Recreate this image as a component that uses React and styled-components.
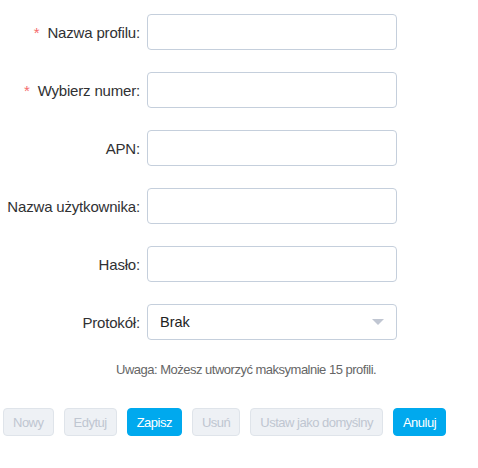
import React from "react";
import styled, { createGlobalStyle } from "styled-components";

const Global = createGlobalStyle`
  body {
    margin: 0;
    background: #fff;
    font-family: "Liberation Sans", Arial, sans-serif;
  }
`;

const Page = styled.div`
  width: 478px;
  padding-top: 14px;
`;

const Form = styled.div`
  display: flex;
  flex-direction: column;
  gap: 22px;
`;

const Row = styled.div`
  display: flex;
  align-items: center;
`;

const Label = styled.label`
  width: 140px;
  padding-right: 7px;
  box-sizing: content-box;
  text-align: right;
  font-size: 15px;
  letter-spacing: -0.18px;
  color: #303133;
  white-space: nowrap;
`;

const Star = styled.span`
  color: #f56c6c;
  margin-right: 8px;
`;

const Input = styled.input`
  width: 250px;
  height: 36px;
  box-sizing: border-box;
  border: 1px solid #c5cfdc;
  border-radius: 4px;
  padding: 0 12px;
  font-size: 14px;
  font-family: inherit;
  outline: none;
`;

const SelectBox = styled.div`
  width: 250px;
  height: 36px;
  box-sizing: border-box;
  border: 1px solid #c5cfdc;
  border-radius: 4px;
  padding: 0 12px;
  display: flex;
  align-items: center;
  justify-content: space-between;
  font-size: 14.5px;
  color: #222;
`;

const Caret = styled.span`
  width: 0;
  height: 0;
  border-left: 6px solid transparent;
  border-right: 6px solid transparent;
  border-top: 6px solid #c0c6d2;
`;

const Note = styled.p`
  margin: 22px 0 0;
  padding-left: 116px;
  font-size: 13px;
  letter-spacing: -0.5px;
  color: #666;
`;

const Buttons = styled.div`
  display: flex;
  gap: 10px;
  padding-left: 3px;
  margin-top: 31px;
`;

const Button = styled.button`
  height: 28px;
  box-sizing: border-box;
  padding: 0 9px;
  border-radius: 4px;
  font-size: 13px;
  letter-spacing: -0.5px;
  font-family: inherit;
  border: 1px solid ${(p) => (p.$primary ? "#00a9ee" : "#dfe4ea")};
  background: ${(p) => (p.$primary ? "#00a9ee" : "#eef1f5")};
  color: ${(p) => (p.$primary ? "#fff" : "#bfc6d1")};
  cursor: ${(p) => (p.$primary ? "pointer" : "not-allowed")};
`;

const fields = [
  { label: "Nazwa profilu:", required: true },
  { label: "Wybierz numer:", required: true },
  { label: "APN:" },
  { label: "Nazwa użytkownika:" },
  { label: "Hasło:", type: "password" },
];

export default function App() {
  return (
    <Page>
      <Global />
      <Form>
        {fields.map((f) => (
          <Row key={f.label}>
            <Label>
              {f.required && <Star>*</Star>}
              {f.label}
            </Label>
            <Input type={f.type || "text"} />
          </Row>
        ))}
        <Row>
          <Label>Protokół:</Label>
          <SelectBox>
            Brak
            <Caret />
          </SelectBox>
        </Row>
      </Form>
      <Note>Uwaga: Możesz utworzyć maksymalnie 15 profili.</Note>
      <Buttons>
        <Button disabled>Nowy</Button>
        <Button disabled>Edytuj</Button>
        <Button $primary>Zapisz</Button>
        <Button disabled>Usuń</Button>
        <Button disabled>Ustaw jako domyślny</Button>
        <Button $primary>Anuluj</Button>
      </Buttons>
    </Page>
  );
}
